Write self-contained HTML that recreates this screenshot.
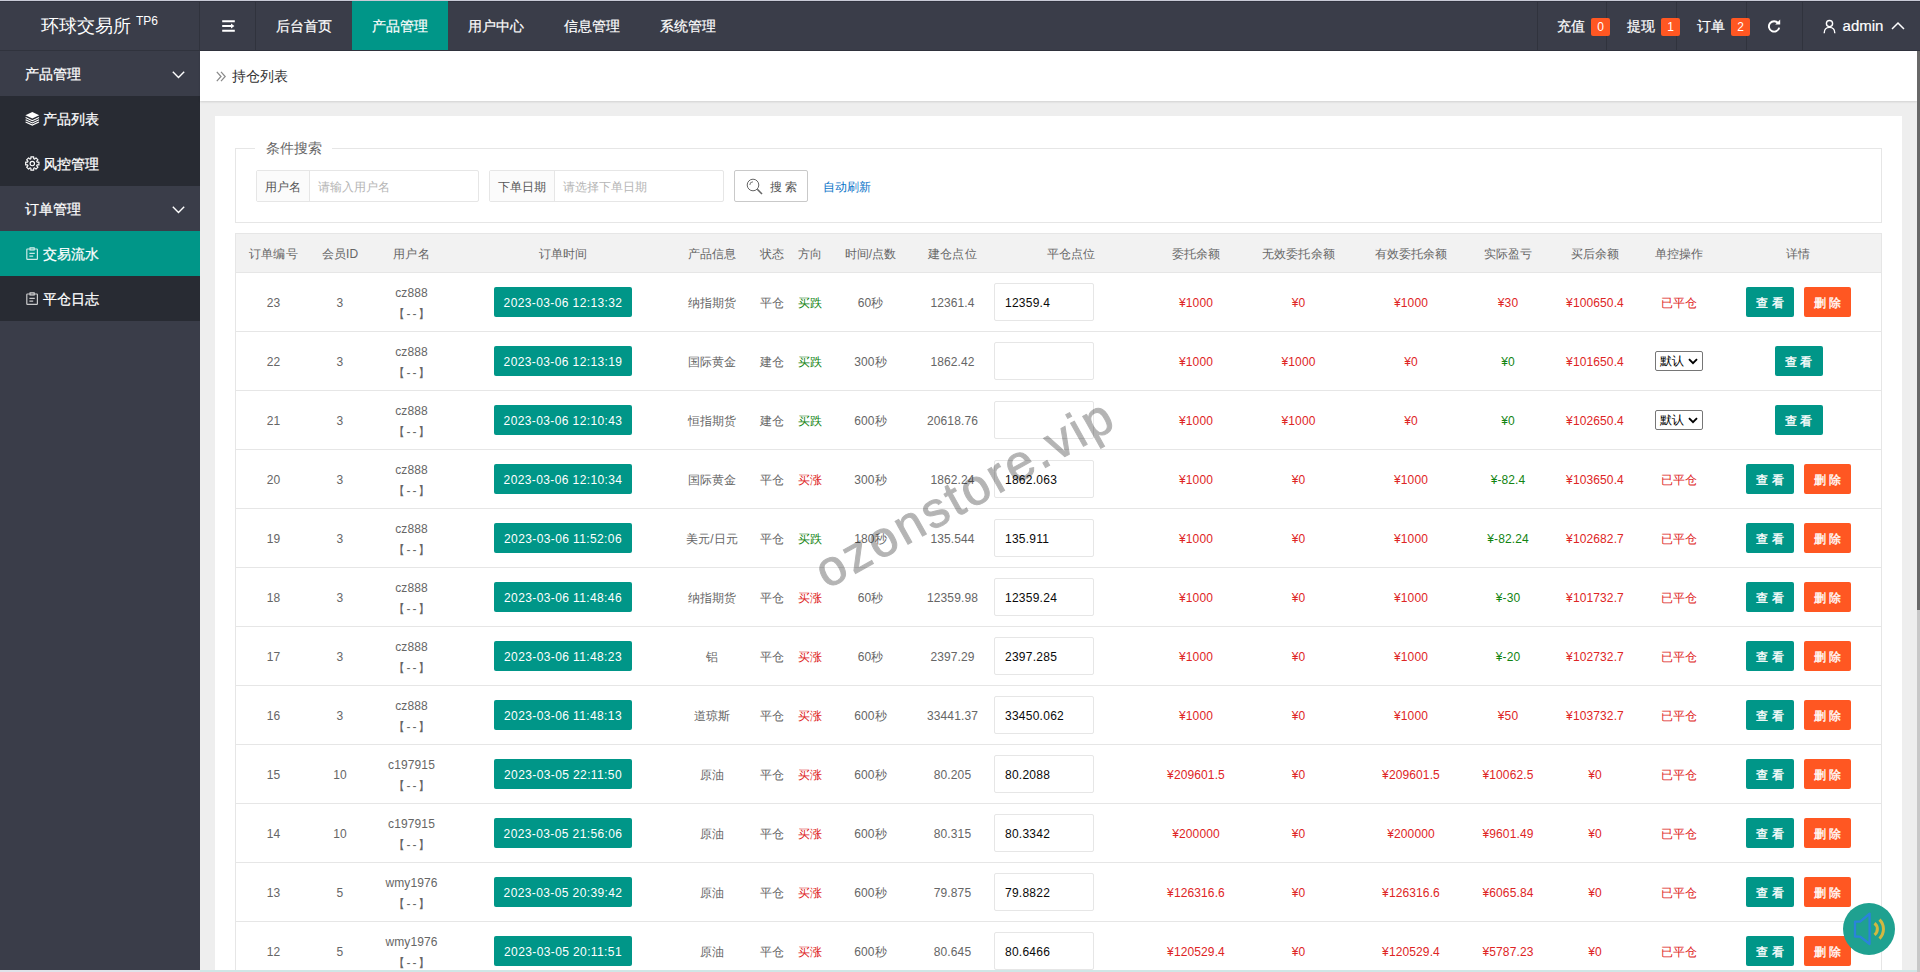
<!DOCTYPE html>
<html lang="zh">
<head>
<meta charset="utf-8">
<title>持仓列表</title>
<style>
*{box-sizing:border-box;margin:0;padding:0}
html,body{width:1920px;height:972px;overflow:hidden}
body{font-family:"Liberation Sans",sans-serif;font-size:14px;color:#333;background:#eee;position:relative}
.abs{position:absolute}
/* header */
.header{position:absolute;left:0;top:0;width:1920px;height:51px;background:#3A3D49;border-top:1px solid #c8cad6;border-bottom:1px solid #30333d;box-shadow:inset 0 1px 0 #31333f}
.logo{position:absolute;left:0;top:0;width:200px;height:49px;line-height:51px;color:#fff;font-size:18px;font-family:"Liberation Serif",serif;padding-left:41px;white-space:nowrap}
.logo sup{font-family:"Liberation Sans",sans-serif;font-size:12px;position:relative;top:-7px;left:5px;vertical-align:baseline}
.vsep{position:absolute;top:1px;width:1px;height:49px;background:#30333d}
.nav{position:absolute;top:0;height:49px;line-height:51px;-webkit-text-stroke:0.2px #fff;color:#fff;font-size:14px;text-align:center;white-space:nowrap}
.nav.on{background:#009688}
.badge{position:absolute;top:17px;height:18px;width:19px;line-height:18px;background:#FF5722;color:#fff;font-size:12px;text-align:center;border-radius:2px}
/* side */
.side{position:absolute;left:0;top:51px;width:200px;height:921px;background:#3A3D49}
.si{position:relative;height:45px;line-height:47px;-webkit-text-stroke:0.25px #fff;color:#fff;font-size:14px;padding-left:25px;white-space:nowrap}
.si.sub{background:#282B33;padding-left:43px}
.si.on{background:#009688}
.si svg.ic{position:absolute;left:25px;top:15px}
.si svg.ar{position:absolute;left:172px;top:20px}
/* body */
.crumb{position:absolute;left:200px;top:51px;width:1717px;height:50px;background:#fff;box-shadow:0 1px 2px rgba(0,0,0,.12);line-height:50px;font-size:14px;color:#333}
.card{position:absolute;left:215px;top:116px;width:1687px;height:860px;background:#fff}
.fs{position:absolute;left:20px;top:32px;width:1647px;height:75px;border:1px solid #e6e6e6}
.lg{position:absolute;left:40px;top:22px;width:77px;height:20px;line-height:20px;background:#fff;color:#666;font-size:14px;text-align:center}
.grp{position:absolute;top:54px;height:32px;border:1px solid #e6e6e6;border-radius:2px;background:#fff;font-size:12px;line-height:32px}
.grp .lb{position:absolute;left:0;top:0;height:30px;background:#FBFBFB;border-right:1px solid #e6e6e6;color:#555;text-align:center;overflow:hidden}
.grp .ph{position:absolute;top:0;color:#b5b5b5}
.sbtn{position:absolute;left:519px;top:54px;width:74px;height:32px;border:1px solid #C9C9C9;border-radius:2px;font-size:12px;line-height:32px;color:#555;background:#fff}
.auto{position:absolute;left:608px;top:54px;height:32px;line-height:34px;font-size:12px;color:#0a74c9}
/* table */
.tbl{position:absolute;left:20px;top:117px;width:1647px;border:1px solid #e6e6e6;border-bottom:none;font-size:12px;color:#666}
.th{position:relative;height:39px;background:#f2f2f2;border-bottom:1px solid #e6e6e6}
.th .c{line-height:40px;top:0;height:38px}
.tr{position:relative;height:59px;border-bottom:1px solid #e6e6e6;background:#fff}
.c{position:absolute;top:0;height:58px;line-height:60px;text-align:center;white-space:nowrap;letter-spacing:.12px}
.c.two{line-height:20.5px;padding-top:10px}
.bk{letter-spacing:2px;margin-left:2px}
.c.r{color:#de2525}
.c.g{color:#128412}
.btn{display:inline-block;height:30px;line-height:32px;padding:0 10px;border-radius:2px;color:#fff;font-size:12px;vertical-align:middle;white-space:nowrap}
.tbtn{background:#009688;width:138px;padding:0;letter-spacing:0.39px}
.vbtn{background:#009688;width:48px;padding:0;-webkit-text-stroke:0.35px #fff}
.dbtn{background:#FF5722;width:47px;padding:0;margin-left:10px;-webkit-text-stroke:0.35px #fff}
.c.bt{line-height:58px;font-size:0}
.c.bt .btn{font-size:12px}
.inp{position:absolute;top:10px;width:100px;height:38px;border:1px solid #e6e6e6;border-radius:2px;line-height:38px;padding-left:10px;color:#0a0a0a;font-size:12px;background:#fff;letter-spacing:.25px;white-space:nowrap;overflow:hidden}
.sel{display:inline-block;vertical-align:middle;width:48px;height:20px;border:1px solid #767676;border-radius:2px;font-size:12px;line-height:18px;color:#000;text-align:left;padding-left:4px;position:relative;background:#fff}
.sel svg{position:absolute;left:32px;top:6px}
/* misc */
.wm{position:absolute;left:965px;top:493px;width:0;height:0}
.wm span{position:absolute;left:-200px;top:-35px;width:400px;height:70px;line-height:70px;text-align:center;font-size:50px;color:#000;opacity:.29;-webkit-text-stroke:1px #000;transform:rotate(-29.2deg);white-space:nowrap;letter-spacing:2.9px}
.fab{position:absolute;left:1843px;top:903px;width:52px;height:52px;border-radius:50%;background:#1fa190}
.thumb{position:absolute;left:1917px;top:51px;width:3px;height:559px;background:#686868}
.track{position:absolute;left:1917px;top:610px;width:3px;height:362px;background:#c8c8c8}
.bot{position:absolute;left:200px;top:970px;width:1717px;height:2px;background:#cfe6e6}
.botl{position:absolute;left:0;top:970px;width:200px;height:2px;background:#dfe3ea}
</style>
</head>
<body>
<div class="header">
  <div class="logo">环球交易所<sup>TP6</sup></div>
  <div class="vsep" style="left:199px"></div>
  <div class="vsep" style="left:255px"></div>
  <svg class="abs" style="left:221px;top:19px" width="14" height="12" viewBox="0 0 14 12"><path d="M1.2 1.3h12.6M1.2 6h9M1.2 10.7h12.6" stroke="#fff" stroke-width="2" fill="none"/><path d="M10 3.6L13.4 6L10 8.4z" fill="#fff"/></svg>
  <div class="nav" style="left:256px;width:96px">后台首页</div>
  <div class="nav on" style="left:352px;width:96px">产品管理</div>
  <div class="nav" style="left:448px;width:96px">用户中心</div>
  <div class="nav" style="left:544px;width:96px">信息管理</div>
  <div class="nav" style="left:640px;width:96px">系统管理</div>
  <div class="vsep" style="left:1537px"></div>
  <div class="vsep" style="left:1606px"></div>
  <div class="vsep" style="left:1676px"></div>
  <div class="vsep" style="left:1746px"></div>
  <div class="vsep" style="left:1802px"></div>
  <div class="nav" style="left:1557px;width:28px">充值</div><div class="badge" style="left:1591px">0</div>
  <div class="nav" style="left:1627px;width:28px">提现</div><div class="badge" style="left:1661px">1</div>
  <div class="nav" style="left:1697px;width:28px">订单</div><div class="badge" style="left:1731px">2</div>
  <svg class="abs" style="left:1767px;top:18px" width="14" height="14" viewBox="0 0 14 14"><path d="M11.2 4.2A5.2 5.2 0 1 0 12.2 8.6" fill="none" stroke="#fff" stroke-width="1.9"/><path d="M8.2 5.6L13.2 5.6L13.2 0.6z" fill="#fff"/></svg>
  <svg class="abs" style="left:1823px;top:18px" width="13" height="15" viewBox="0 0 13 15"><circle cx="6.5" cy="4.6" r="3.1" fill="none" stroke="#fff" stroke-width="1.4"/><path d="M1.2 14.2C1.2 10.4 3.6 8.4 6.5 8.4S11.8 10.4 11.8 14.2" fill="none" stroke="#fff" stroke-width="1.4"/></svg>
  <div class="nav" style="left:1842px;width:42px;font-size:15px;line-height:49px">admin</div>
  <svg class="abs" style="left:1891px;top:20px" width="14" height="9" viewBox="0 0 14 9"><path d="M1 8L7 2L13 8" fill="none" stroke="#fff" stroke-width="1.5"/></svg>
</div>
<div class="side">
  <div class="si">产品管理<svg class="ar" width="13" height="8" viewBox="0 0 13 8"><path d="M0.8 0.8L6.5 6.5L12.2 0.8" fill="none" stroke="#fff" stroke-width="1.4"/></svg></div>
  <div class="si sub"><svg class="ic" width="15" height="15" viewBox="0 0 15 15"><path d="M7.3 1L14.2 4.2L7.3 7.4L0.4 4.2z" fill="#fff"/><path d="M0.6 6.5L7.3 9.7L14 6.5M0.6 8.7L7.3 11.9L14 8.7M0.6 10.9L7.3 14.1L14 10.9" fill="none" stroke="#fff" stroke-width="1.1"/></svg>产品列表</div>
  <div class="si sub"><svg class="ic" width="15" height="15" viewBox="0 0 15 15"><path d="M5.89 0.85L8.71 0.85L8.73 2.81L9.60 3.17L11.00 1.80L13.00 3.80L11.63 5.20L11.99 6.07L13.95 6.09L13.95 8.91L11.99 8.93L11.63 9.80L13.00 11.20L11.00 13.20L9.60 11.83L8.73 12.19L8.71 14.15L5.89 14.15L5.87 12.19L5.00 11.83L3.60 13.20L1.60 11.20L2.97 9.80L2.61 8.93L0.65 8.91L0.65 6.09L2.61 6.07L2.97 5.20L1.60 3.80L3.60 1.80L5.00 3.17L5.87 2.81z" fill="none" stroke="#fff" stroke-width="1.15" stroke-linejoin="round"/><circle cx="7.3" cy="7.5" r="2.2" fill="none" stroke="#fff" stroke-width="1.15"/></svg>风控管理</div>
  <div class="si">订单管理<svg class="ar" width="13" height="8" viewBox="0 0 13 8"><path d="M0.8 0.8L6.5 6.5L12.2 0.8" fill="none" stroke="#fff" stroke-width="1.4"/></svg></div>
  <div class="si sub on"><svg class="ic" width="15" height="15" viewBox="0 0 15 15"><rect x="1.8" y="3" width="10.6" height="10.4" rx="0.6" fill="none" stroke="#fff" stroke-width="1.2" opacity=".8"/><rect x="5" y="1.7" width="4.2" height="2.4" fill="none" stroke="#fff" stroke-width="1" opacity=".8"/><path d="M4.4 7.4h5.4M4.4 10.2h3.8" stroke="#fff" stroke-width="1.2" opacity=".8"/></svg>交易流水</div>
  <div class="si sub"><svg class="ic" width="15" height="15" viewBox="0 0 15 15"><rect x="1.8" y="3" width="10.6" height="10.4" rx="0.6" fill="none" stroke="#fff" stroke-width="1.2" opacity=".75"/><rect x="5" y="1.7" width="4.2" height="2.4" fill="none" stroke="#fff" stroke-width="1" opacity=".75"/><path d="M4.4 7.4h5.4M4.4 10.2h3.8" stroke="#fff" stroke-width="1.2" opacity=".75"/></svg>平仓日志</div>
</div>
<div class="crumb"><svg class="abs" style="left:16px;top:20px" width="10" height="11" viewBox="0 0 10 11"><path d="M0.8 0.8L5 5.5L0.8 10.2M5 0.8L9.2 5.5L5 10.2" fill="none" stroke="#8a8a8a" stroke-width="1.25"/></svg><span class="abs" style="left:32px;top:0">持仓列表</span></div>
<div class="card">
  <div class="fs"></div>
  <div class="lg">条件搜索</div>
  <div class="grp" style="left:41px;width:223px"><div class="lb" style="width:53px">用户名</div><div class="ph" style="left:61px">请输入用户名</div></div>
  <div class="grp" style="left:274px;width:235px"><div class="lb" style="width:65px">下单日期</div><div class="ph" style="left:73px">请选择下单日期</div></div>
  <div class="sbtn"><svg class="abs" style="left:11px;top:7px" width="17" height="17" viewBox="0 0 17 17"><circle cx="7" cy="7" r="5.8" fill="none" stroke="#666" stroke-width="1"/><path d="M3.8 7A3.2 3.2 0 0 1 7 3.8" fill="none" stroke="#666" stroke-width="0.9"/><path d="M11.3 11.3L16 16" stroke="#666" stroke-width="1.6"/></svg><span class="abs" style="left:35px;top:0">搜 索</span></div>
  <div class="auto">自动刷新</div>
  <div class="tbl">
    <div class="th"><div class="c " style="left:-37.5px;width:150px">订单编号</div><div class="c " style="left:29px;width:150px">会员ID</div><div class="c " style="left:100.5px;width:150px">用户名</div><div class="c " style="left:252px;width:150px">订单时间</div><div class="c " style="left:401px;width:150px">产品信息</div><div class="c " style="left:506.5px;width:60px">状态</div><div class="c " style="left:544px;width:60px">方向</div><div class="c " style="left:559.5px;width:150px">时间/点数</div><div class="c " style="left:641.5px;width:150px">建仓点位</div><div class="c " style="left:760px;width:150px">平仓点位</div><div class="c " style="left:885px;width:150px">委托余额</div><div class="c " style="left:987.5px;width:150px">无效委托余额</div><div class="c " style="left:1100px;width:150px">有效委托余额</div><div class="c " style="left:1197px;width:150px">实际盈亏</div><div class="c " style="left:1284px;width:150px">买后余额</div><div class="c " style="left:1368px;width:150px">单控操作</div><div class="c " style="left:1487.5px;width:150px">详情</div></div>
<div class="tr"><div class="c " style="left:-37.5px;width:150px">23</div><div class="c " style="left:29px;width:150px">3</div><div class="c two" style="left:100.5px;width:150px">cz888<br><span class="bk">【--】</span></div><div class="c bt" style="left:227px;width:200px"><span class="btn tbtn">2023-03-06 12:13:32</span></div><div class="c " style="left:401px;width:150px">纳指期货</div><div class="c " style="left:506.5px;width:60px">平仓</div><div class="c g" style="left:544px;width:60px">买跌</div><div class="c " style="left:559.5px;width:150px">60秒</div><div class="c " style="left:641.5px;width:150px">12361.4</div><div class="inp" style="left:758px">12359.4</div><div class="c r" style="left:885px;width:150px">¥1000</div><div class="c r" style="left:987.5px;width:150px">¥0</div><div class="c r" style="left:1100px;width:150px">¥1000</div><div class="c r" style="left:1197px;width:150px">¥30</div><div class="c r" style="left:1284px;width:150px">¥100650.4</div><div class="c r" style="left:1368px;width:150px">已平仓</div><div class="c bt" style="left:1462.5px;width:200px"><span class="btn vbtn">查 看</span><span class="btn dbtn">删 除</span></div></div>
<div class="tr"><div class="c " style="left:-37.5px;width:150px">22</div><div class="c " style="left:29px;width:150px">3</div><div class="c two" style="left:100.5px;width:150px">cz888<br><span class="bk">【--】</span></div><div class="c bt" style="left:227px;width:200px"><span class="btn tbtn">2023-03-06 12:13:19</span></div><div class="c " style="left:401px;width:150px">国际黄金</div><div class="c " style="left:506.5px;width:60px">建仓</div><div class="c g" style="left:544px;width:60px">买跌</div><div class="c " style="left:559.5px;width:150px">300秒</div><div class="c " style="left:641.5px;width:150px">1862.42</div><div class="inp" style="left:758px"></div><div class="c r" style="left:885px;width:150px">¥1000</div><div class="c r" style="left:987.5px;width:150px">¥1000</div><div class="c r" style="left:1100px;width:150px">¥0</div><div class="c g" style="left:1197px;width:150px">¥0</div><div class="c r" style="left:1284px;width:150px">¥101650.4</div><div class="c bt" style="left:1368px;width:150px"><span class="sel">默认<svg width="10" height="7" viewBox="0 0 10 7"><path d="M1 1.2 L5 5.2 L9 1.2" fill="none" stroke="#000" stroke-width="1.9"/></svg></span></div><div class="c bt" style="left:1462.5px;width:200px"><span class="btn vbtn">查 看</span></div></div>
<div class="tr"><div class="c " style="left:-37.5px;width:150px">21</div><div class="c " style="left:29px;width:150px">3</div><div class="c two" style="left:100.5px;width:150px">cz888<br><span class="bk">【--】</span></div><div class="c bt" style="left:227px;width:200px"><span class="btn tbtn">2023-03-06 12:10:43</span></div><div class="c " style="left:401px;width:150px">恒指期货</div><div class="c " style="left:506.5px;width:60px">建仓</div><div class="c g" style="left:544px;width:60px">买跌</div><div class="c " style="left:559.5px;width:150px">600秒</div><div class="c " style="left:641.5px;width:150px">20618.76</div><div class="inp" style="left:758px"></div><div class="c r" style="left:885px;width:150px">¥1000</div><div class="c r" style="left:987.5px;width:150px">¥1000</div><div class="c r" style="left:1100px;width:150px">¥0</div><div class="c g" style="left:1197px;width:150px">¥0</div><div class="c r" style="left:1284px;width:150px">¥102650.4</div><div class="c bt" style="left:1368px;width:150px"><span class="sel">默认<svg width="10" height="7" viewBox="0 0 10 7"><path d="M1 1.2 L5 5.2 L9 1.2" fill="none" stroke="#000" stroke-width="1.9"/></svg></span></div><div class="c bt" style="left:1462.5px;width:200px"><span class="btn vbtn">查 看</span></div></div>
<div class="tr"><div class="c " style="left:-37.5px;width:150px">20</div><div class="c " style="left:29px;width:150px">3</div><div class="c two" style="left:100.5px;width:150px">cz888<br><span class="bk">【--】</span></div><div class="c bt" style="left:227px;width:200px"><span class="btn tbtn">2023-03-06 12:10:34</span></div><div class="c " style="left:401px;width:150px">国际黄金</div><div class="c " style="left:506.5px;width:60px">平仓</div><div class="c r" style="left:544px;width:60px">买涨</div><div class="c " style="left:559.5px;width:150px">300秒</div><div class="c " style="left:641.5px;width:150px">1862.24</div><div class="inp" style="left:758px">1862.063</div><div class="c r" style="left:885px;width:150px">¥1000</div><div class="c r" style="left:987.5px;width:150px">¥0</div><div class="c r" style="left:1100px;width:150px">¥1000</div><div class="c g" style="left:1197px;width:150px">¥-82.4</div><div class="c r" style="left:1284px;width:150px">¥103650.4</div><div class="c r" style="left:1368px;width:150px">已平仓</div><div class="c bt" style="left:1462.5px;width:200px"><span class="btn vbtn">查 看</span><span class="btn dbtn">删 除</span></div></div>
<div class="tr"><div class="c " style="left:-37.5px;width:150px">19</div><div class="c " style="left:29px;width:150px">3</div><div class="c two" style="left:100.5px;width:150px">cz888<br><span class="bk">【--】</span></div><div class="c bt" style="left:227px;width:200px"><span class="btn tbtn">2023-03-06 11:52:06</span></div><div class="c " style="left:401px;width:150px">美元/日元</div><div class="c " style="left:506.5px;width:60px">平仓</div><div class="c g" style="left:544px;width:60px">买跌</div><div class="c " style="left:559.5px;width:150px">180秒</div><div class="c " style="left:641.5px;width:150px">135.544</div><div class="inp" style="left:758px">135.911</div><div class="c r" style="left:885px;width:150px">¥1000</div><div class="c r" style="left:987.5px;width:150px">¥0</div><div class="c r" style="left:1100px;width:150px">¥1000</div><div class="c g" style="left:1197px;width:150px">¥-82.24</div><div class="c r" style="left:1284px;width:150px">¥102682.7</div><div class="c r" style="left:1368px;width:150px">已平仓</div><div class="c bt" style="left:1462.5px;width:200px"><span class="btn vbtn">查 看</span><span class="btn dbtn">删 除</span></div></div>
<div class="tr"><div class="c " style="left:-37.5px;width:150px">18</div><div class="c " style="left:29px;width:150px">3</div><div class="c two" style="left:100.5px;width:150px">cz888<br><span class="bk">【--】</span></div><div class="c bt" style="left:227px;width:200px"><span class="btn tbtn">2023-03-06 11:48:46</span></div><div class="c " style="left:401px;width:150px">纳指期货</div><div class="c " style="left:506.5px;width:60px">平仓</div><div class="c r" style="left:544px;width:60px">买涨</div><div class="c " style="left:559.5px;width:150px">60秒</div><div class="c " style="left:641.5px;width:150px">12359.98</div><div class="inp" style="left:758px">12359.24</div><div class="c r" style="left:885px;width:150px">¥1000</div><div class="c r" style="left:987.5px;width:150px">¥0</div><div class="c r" style="left:1100px;width:150px">¥1000</div><div class="c g" style="left:1197px;width:150px">¥-30</div><div class="c r" style="left:1284px;width:150px">¥101732.7</div><div class="c r" style="left:1368px;width:150px">已平仓</div><div class="c bt" style="left:1462.5px;width:200px"><span class="btn vbtn">查 看</span><span class="btn dbtn">删 除</span></div></div>
<div class="tr"><div class="c " style="left:-37.5px;width:150px">17</div><div class="c " style="left:29px;width:150px">3</div><div class="c two" style="left:100.5px;width:150px">cz888<br><span class="bk">【--】</span></div><div class="c bt" style="left:227px;width:200px"><span class="btn tbtn">2023-03-06 11:48:23</span></div><div class="c " style="left:401px;width:150px">铝</div><div class="c " style="left:506.5px;width:60px">平仓</div><div class="c r" style="left:544px;width:60px">买涨</div><div class="c " style="left:559.5px;width:150px">60秒</div><div class="c " style="left:641.5px;width:150px">2397.29</div><div class="inp" style="left:758px">2397.285</div><div class="c r" style="left:885px;width:150px">¥1000</div><div class="c r" style="left:987.5px;width:150px">¥0</div><div class="c r" style="left:1100px;width:150px">¥1000</div><div class="c g" style="left:1197px;width:150px">¥-20</div><div class="c r" style="left:1284px;width:150px">¥102732.7</div><div class="c r" style="left:1368px;width:150px">已平仓</div><div class="c bt" style="left:1462.5px;width:200px"><span class="btn vbtn">查 看</span><span class="btn dbtn">删 除</span></div></div>
<div class="tr"><div class="c " style="left:-37.5px;width:150px">16</div><div class="c " style="left:29px;width:150px">3</div><div class="c two" style="left:100.5px;width:150px">cz888<br><span class="bk">【--】</span></div><div class="c bt" style="left:227px;width:200px"><span class="btn tbtn">2023-03-06 11:48:13</span></div><div class="c " style="left:401px;width:150px">道琼斯</div><div class="c " style="left:506.5px;width:60px">平仓</div><div class="c r" style="left:544px;width:60px">买涨</div><div class="c " style="left:559.5px;width:150px">600秒</div><div class="c " style="left:641.5px;width:150px">33441.37</div><div class="inp" style="left:758px">33450.062</div><div class="c r" style="left:885px;width:150px">¥1000</div><div class="c r" style="left:987.5px;width:150px">¥0</div><div class="c r" style="left:1100px;width:150px">¥1000</div><div class="c r" style="left:1197px;width:150px">¥50</div><div class="c r" style="left:1284px;width:150px">¥103732.7</div><div class="c r" style="left:1368px;width:150px">已平仓</div><div class="c bt" style="left:1462.5px;width:200px"><span class="btn vbtn">查 看</span><span class="btn dbtn">删 除</span></div></div>
<div class="tr"><div class="c " style="left:-37.5px;width:150px">15</div><div class="c " style="left:29px;width:150px">10</div><div class="c two" style="left:100.5px;width:150px">c197915<br><span class="bk">【--】</span></div><div class="c bt" style="left:227px;width:200px"><span class="btn tbtn">2023-03-05 22:11:50</span></div><div class="c " style="left:401px;width:150px">原油</div><div class="c " style="left:506.5px;width:60px">平仓</div><div class="c r" style="left:544px;width:60px">买涨</div><div class="c " style="left:559.5px;width:150px">600秒</div><div class="c " style="left:641.5px;width:150px">80.205</div><div class="inp" style="left:758px">80.2088</div><div class="c r" style="left:885px;width:150px">¥209601.5</div><div class="c r" style="left:987.5px;width:150px">¥0</div><div class="c r" style="left:1100px;width:150px">¥209601.5</div><div class="c r" style="left:1197px;width:150px">¥10062.5</div><div class="c r" style="left:1284px;width:150px">¥0</div><div class="c r" style="left:1368px;width:150px">已平仓</div><div class="c bt" style="left:1462.5px;width:200px"><span class="btn vbtn">查 看</span><span class="btn dbtn">删 除</span></div></div>
<div class="tr"><div class="c " style="left:-37.5px;width:150px">14</div><div class="c " style="left:29px;width:150px">10</div><div class="c two" style="left:100.5px;width:150px">c197915<br><span class="bk">【--】</span></div><div class="c bt" style="left:227px;width:200px"><span class="btn tbtn">2023-03-05 21:56:06</span></div><div class="c " style="left:401px;width:150px">原油</div><div class="c " style="left:506.5px;width:60px">平仓</div><div class="c r" style="left:544px;width:60px">买涨</div><div class="c " style="left:559.5px;width:150px">600秒</div><div class="c " style="left:641.5px;width:150px">80.315</div><div class="inp" style="left:758px">80.3342</div><div class="c r" style="left:885px;width:150px">¥200000</div><div class="c r" style="left:987.5px;width:150px">¥0</div><div class="c r" style="left:1100px;width:150px">¥200000</div><div class="c r" style="left:1197px;width:150px">¥9601.49</div><div class="c r" style="left:1284px;width:150px">¥0</div><div class="c r" style="left:1368px;width:150px">已平仓</div><div class="c bt" style="left:1462.5px;width:200px"><span class="btn vbtn">查 看</span><span class="btn dbtn">删 除</span></div></div>
<div class="tr"><div class="c " style="left:-37.5px;width:150px">13</div><div class="c " style="left:29px;width:150px">5</div><div class="c two" style="left:100.5px;width:150px">wmy1976<br><span class="bk">【--】</span></div><div class="c bt" style="left:227px;width:200px"><span class="btn tbtn">2023-03-05 20:39:42</span></div><div class="c " style="left:401px;width:150px">原油</div><div class="c " style="left:506.5px;width:60px">平仓</div><div class="c r" style="left:544px;width:60px">买涨</div><div class="c " style="left:559.5px;width:150px">600秒</div><div class="c " style="left:641.5px;width:150px">79.875</div><div class="inp" style="left:758px">79.8822</div><div class="c r" style="left:885px;width:150px">¥126316.6</div><div class="c r" style="left:987.5px;width:150px">¥0</div><div class="c r" style="left:1100px;width:150px">¥126316.6</div><div class="c r" style="left:1197px;width:150px">¥6065.84</div><div class="c r" style="left:1284px;width:150px">¥0</div><div class="c r" style="left:1368px;width:150px">已平仓</div><div class="c bt" style="left:1462.5px;width:200px"><span class="btn vbtn">查 看</span><span class="btn dbtn">删 除</span></div></div>
<div class="tr"><div class="c " style="left:-37.5px;width:150px">12</div><div class="c " style="left:29px;width:150px">5</div><div class="c two" style="left:100.5px;width:150px">wmy1976<br><span class="bk">【--】</span></div><div class="c bt" style="left:227px;width:200px"><span class="btn tbtn">2023-03-05 20:11:51</span></div><div class="c " style="left:401px;width:150px">原油</div><div class="c " style="left:506.5px;width:60px">平仓</div><div class="c r" style="left:544px;width:60px">买涨</div><div class="c " style="left:559.5px;width:150px">600秒</div><div class="c " style="left:641.5px;width:150px">80.645</div><div class="inp" style="left:758px">80.6466</div><div class="c r" style="left:885px;width:150px">¥120529.4</div><div class="c r" style="left:987.5px;width:150px">¥0</div><div class="c r" style="left:1100px;width:150px">¥120529.4</div><div class="c r" style="left:1197px;width:150px">¥5787.23</div><div class="c r" style="left:1284px;width:150px">¥0</div><div class="c r" style="left:1368px;width:150px">已平仓</div><div class="c bt" style="left:1462.5px;width:200px"><span class="btn vbtn">查 看</span><span class="btn dbtn">删 除</span></div></div>
  </div>
</div>
<div class="wm"><span>ozonstore.vip</span></div>
<div class="fab"><svg width="52" height="52" viewBox="0 0 52 52"><path d="M12 18.6L17.2 18.6L26.6 10.6L26.6 41L17.2 33.6L12 33.6z" fill="none" stroke="#2b80e2" stroke-width="2.3" opacity=".92" stroke-linejoin="round"/><path d="M31.5 20.3A7.3 7.3 0 0 1 31.5 31.9" fill="none" stroke="#d3b840" stroke-width="3"/><path d="M36.5 16.6A13.4 13.4 0 0 1 36.5 35.6" fill="none" stroke="#d3b840" stroke-width="3"/></svg></div>
<div class="thumb"></div><div class="track"></div>
<div class="bot"></div><div class="botl"></div>
</body>
</html>
